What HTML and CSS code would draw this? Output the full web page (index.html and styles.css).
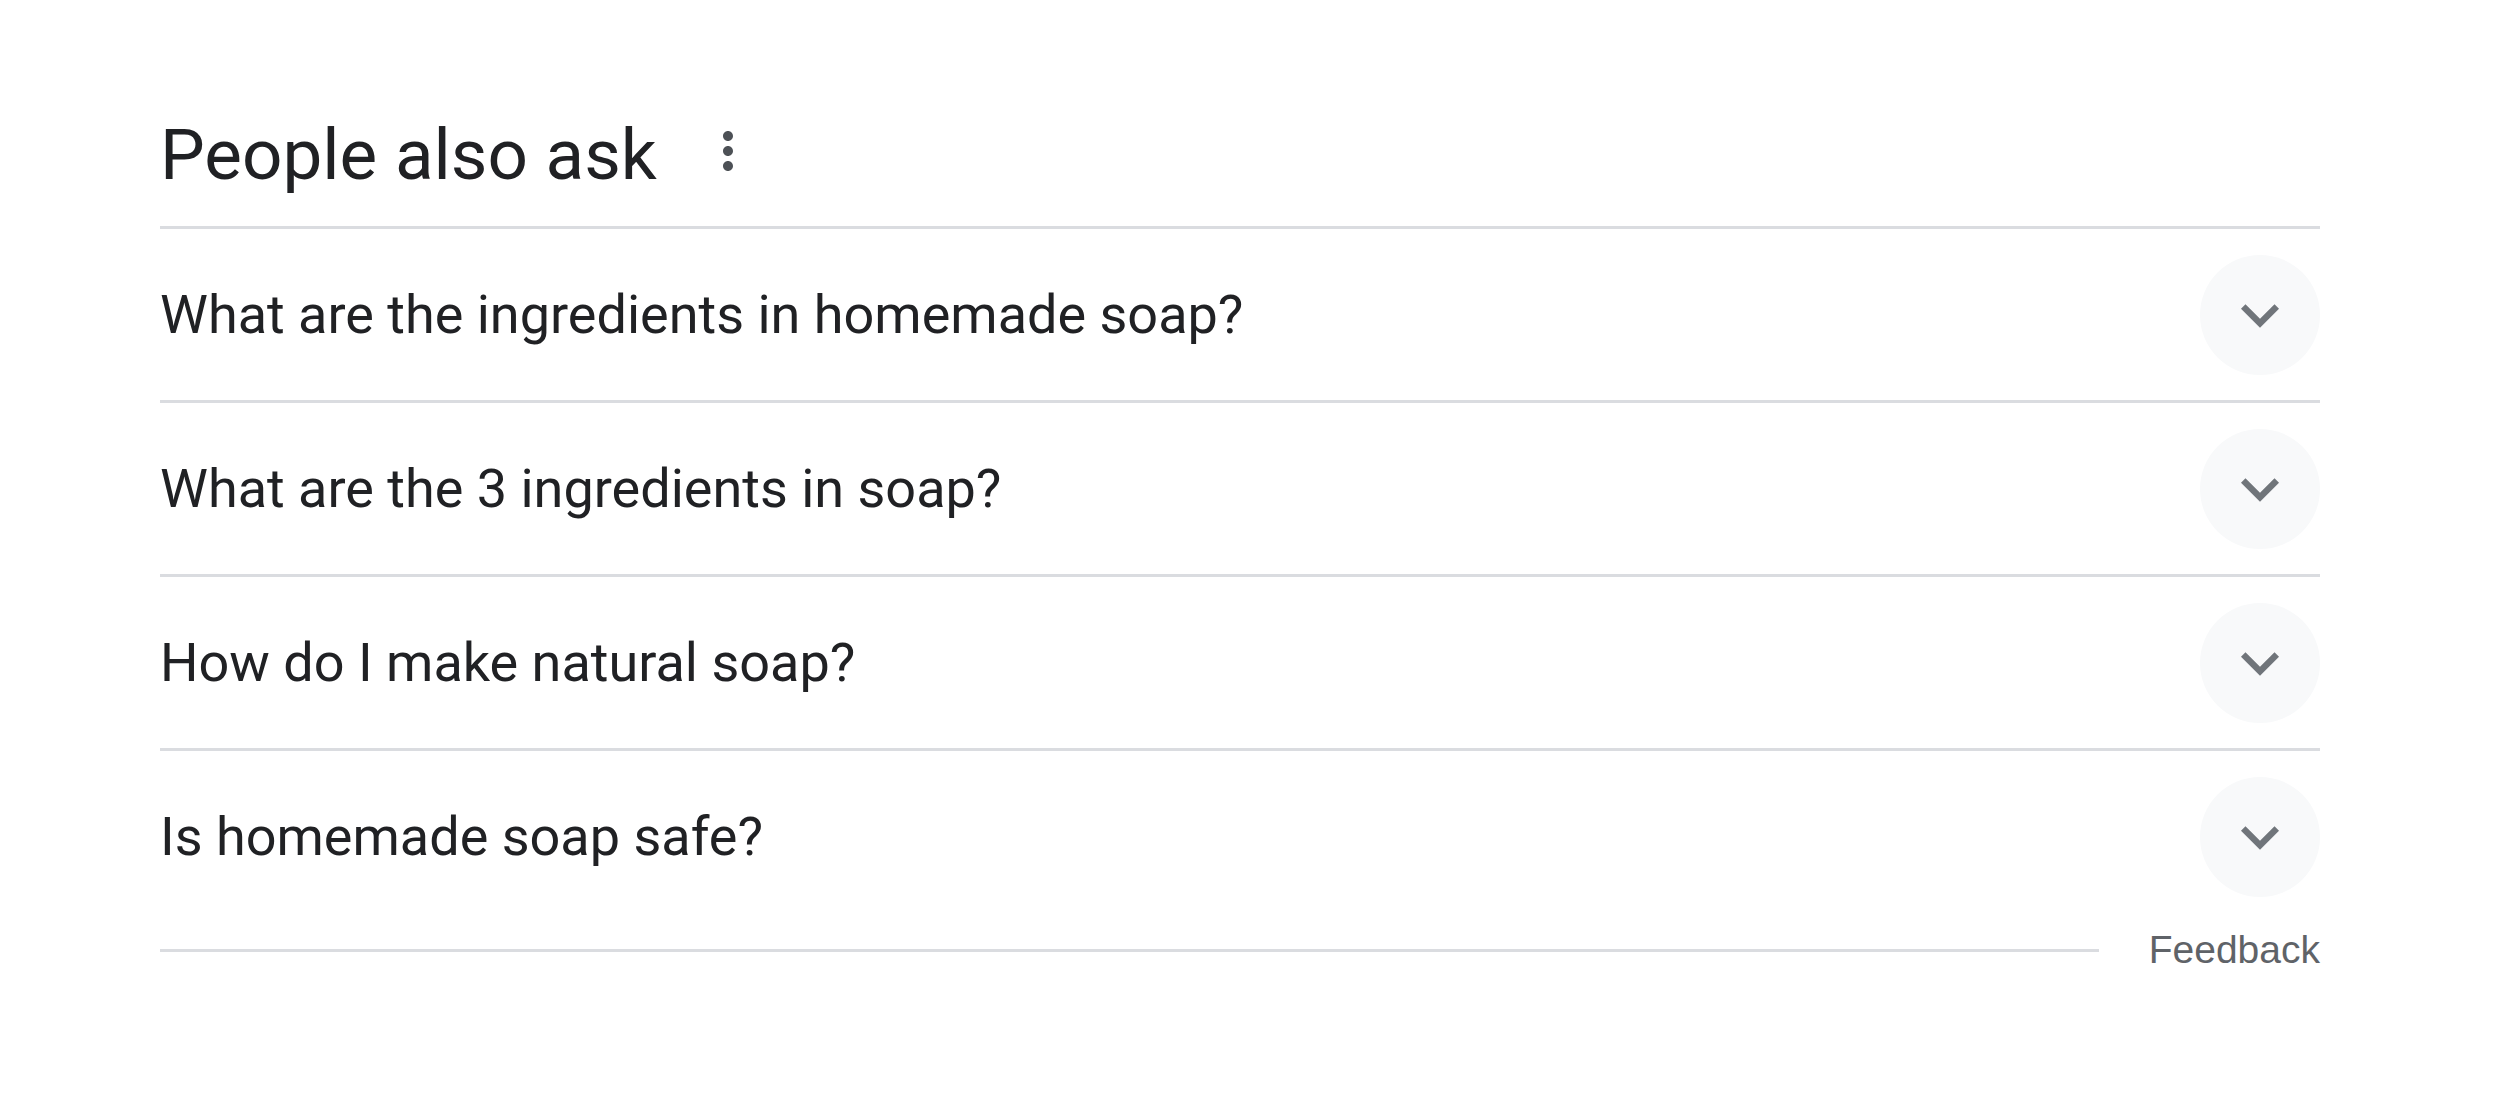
FILE: index.html
```html
<!DOCTYPE html>
<html lang="en">
<head>
    <meta charset="UTF-8">
    <title>People also ask</title>
    <link rel="stylesheet" href="styles.css">
</head>
<body>
    <div class="paa">
        <div class="paa-head">
            <h2>People also ask</h2>
            <span class="more-btn">
                <svg viewBox="0 0 24 24"><path d="M12 8c1.1 0 2-.9 2-2s-.9-2-2-2-2 .9-2 2 .9 2 2 2zm0 2c-1.1 0-2 .9-2 2s.9 2 2 2 2-.9 2-2-.9-2-2-2zm0 6c-1.1 0-2 .9-2 2s.9 2 2 2 2-.9 2-2-.9-2-2-2z"/></svg>
            </span>
        </div>

        <div class="questions">
            <div class="question">
                <span class="q-text">What are the ingredients in homemade soap?</span>
                <span class="expand"><svg viewBox="0 0 24 24"><path d="M16.59 8.59L12 13.17 7.41 8.59 6 10l6 6 6-6z"/></svg></span>
            </div>
            <div class="question">
                <span class="q-text">What are the 3 ingredients in soap?</span>
                <span class="expand"><svg viewBox="0 0 24 24"><path d="M16.59 8.59L12 13.17 7.41 8.59 6 10l6 6 6-6z"/></svg></span>
            </div>
            <div class="question">
                <span class="q-text">How do I make natural soap?</span>
                <span class="expand"><svg viewBox="0 0 24 24"><path d="M16.59 8.59L12 13.17 7.41 8.59 6 10l6 6 6-6z"/></svg></span>
            </div>
            <div class="question">
                <span class="q-text">Is homemade soap safe?</span>
                <span class="expand"><svg viewBox="0 0 24 24"><path d="M16.59 8.59L12 13.17 7.41 8.59 6 10l6 6 6-6z"/></svg></span>
            </div>
        </div>

        <div class="paa-foot">
            <div class="foot-line"></div>
            <span class="feedback">Feedback</span>
        </div>
    </div>
</body>
</html>
```

FILE: styles.css
```css
body { margin: 0; background: #fff; font-family: Roboto, "Noto Sans", sans-serif; color: #202124; }
.paa { margin-left: 160px; width: 2160px; }

.paa-head { display: flex; align-items: center; padding-top: 111px; padding-bottom: 27px; border-bottom: 3px solid #dadce0; }
.paa-head h2 { margin: 0; font-size: 71px; font-weight: 400; line-height: 88px; }
.more-btn { margin-left: 41px; width: 60px; height: 60px; margin-top: -8px; }
.more-btn svg { display: block; width: 60px; height: 60px; fill: #4d5156; }

.question { display: flex; align-items: center; justify-content: space-between; height: 171px; border-bottom: 3px solid #dadce0; }
.question:last-child { border-bottom: none; }
.q-text { font-size: 54px; line-height: 66px; }
.expand { width: 120px; height: 120px; border-radius: 50%; background: #f8f9fa; display: flex; align-items: center; justify-content: center; }
.expand svg { width: 76px; height: 76px; fill: #70757a; }

.paa-foot { display: flex; align-items: center; padding-top: 6px; }
.foot-line { flex: 1; height: 3px; background: #dadce0; }
.feedback { margin-left: 50px; font-family: "Liberation Sans", Arial, sans-serif; font-size: 39px; line-height: 44px; color: #5f6368; }
```
